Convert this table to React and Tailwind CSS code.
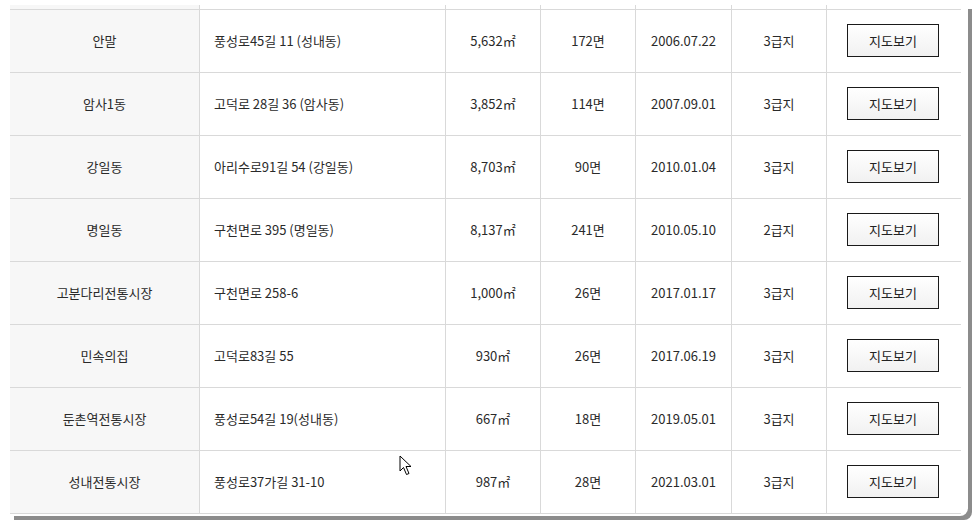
import React from 'react';

const rows = [
  { name: '안말', addr: '풍성로45길 11 (성내동)', area: '5,632㎡', lots: '172면', date: '2006.07.22', grade: '3급지' },
  { name: '암사1동', addr: '고덕로 28길 36 (암사동)', area: '3,852㎡', lots: '114면', date: '2007.09.01', grade: '3급지' },
  { name: '강일동', addr: '아리수로91길 54 (강일동)', area: '8,703㎡', lots: '90면', date: '2010.01.04', grade: '3급지' },
  { name: '명일동', addr: '구천면로 395 (명일동)', area: '8,137㎡', lots: '241면', date: '2010.05.10', grade: '2급지' },
  { name: '고분다리전통시장', addr: '구천면로 258-6', area: '1,000㎡', lots: '26면', date: '2017.01.17', grade: '3급지' },
  { name: '민속의집', addr: '고덕로83길 55', area: '930㎡', lots: '26면', date: '2017.06.19', grade: '3급지' },
  { name: '둔촌역전통시장', addr: '풍성로54길 19(성내동)', area: '667㎡', lots: '18면', date: '2019.05.01', grade: '3급지' },
  { name: '성내전통시장', addr: '풍성로37가길 31-10', area: '987㎡', lots: '28면', date: '2021.03.01', grade: '3급지' },
];

const Cursor = () => (
  <svg className="absolute left-[399px] top-[455px]" width="14" height="21" viewBox="0 0 14 21">
    <path d="M1 1 L1 16 L4.5 12.5 L7.5 19.5 L10 18.5 L7 11.5 L12 11.5 Z" fill="#fff" stroke="#000" strokeWidth="1" strokeLinejoin="round" />
  </svg>
);

const Row = ({ r }) => (
  <div className="flex h-[63px] border-t border-[#d9d9d9]">
    <div className="w-[190px] shrink-0 border-r border-[#d9d9d9] bg-[#f7f7f7] flex items-center justify-center">{r.name}</div>
    <div className="w-[246px] shrink-0 border-r border-[#d9d9d9] flex items-center pl-[14px]">{r.addr}</div>
    <div className="w-[95px] shrink-0 border-r border-[#d9d9d9] flex items-center justify-center">{r.area}</div>
    <div className="w-[95px] shrink-0 border-r border-[#d9d9d9] flex items-center justify-center">{r.lots}</div>
    <div className="w-[96px] shrink-0 border-r border-[#d9d9d9] flex items-center justify-center">{r.date}</div>
    <div className="w-[95px] shrink-0 border-r border-[#d9d9d9] flex items-center justify-center">{r.grade}</div>
    <div className="w-[134px] shrink-0 flex items-center pl-[20px] pb-[2px]">
      <button className="w-[92px] h-[33px] border border-[#1a1a1a] bg-gradient-to-b from-white to-[#f1f1f1] text-[13px] text-[#222] pt-[1px]">
        지도보기
      </button>
    </div>
  </div>
);

export default function App() {
  return (
    <div
      className="relative w-[975px] h-[524px] bg-white overflow-hidden text-[13px] text-[#2a2a2a]"
      style={{ fontFamily: '"Noto Sans CJK KR", "Noto Sans", sans-serif' }}
    >
      <div className="ml-[10px] mt-[5px] w-[958px] h-[511px] bg-white rounded-br-[8px] shadow-[4px_4px_0_#8c8c8c]">
        <div className="flex h-[4px]">
          <div className="w-[190px] border-r border-[#d9d9d9] bg-[#f7f7f7]" />
          <div className="w-[246px] border-r border-[#d9d9d9]" />
          <div className="w-[95px] border-r border-[#d9d9d9]" />
          <div className="w-[95px] border-r border-[#d9d9d9]" />
          <div className="w-[96px] border-r border-[#d9d9d9]" />
          <div className="w-[95px] border-r border-[#d9d9d9]" />
          <div className="w-[134px]" />
        </div>
        <div className="w-[951px] border-b border-[#d9d9d9]">
          {rows.map((r) => (
            <Row key={r.name} r={r} />
          ))}
        </div>
      </div>
      <Cursor />
    </div>
  );
}
